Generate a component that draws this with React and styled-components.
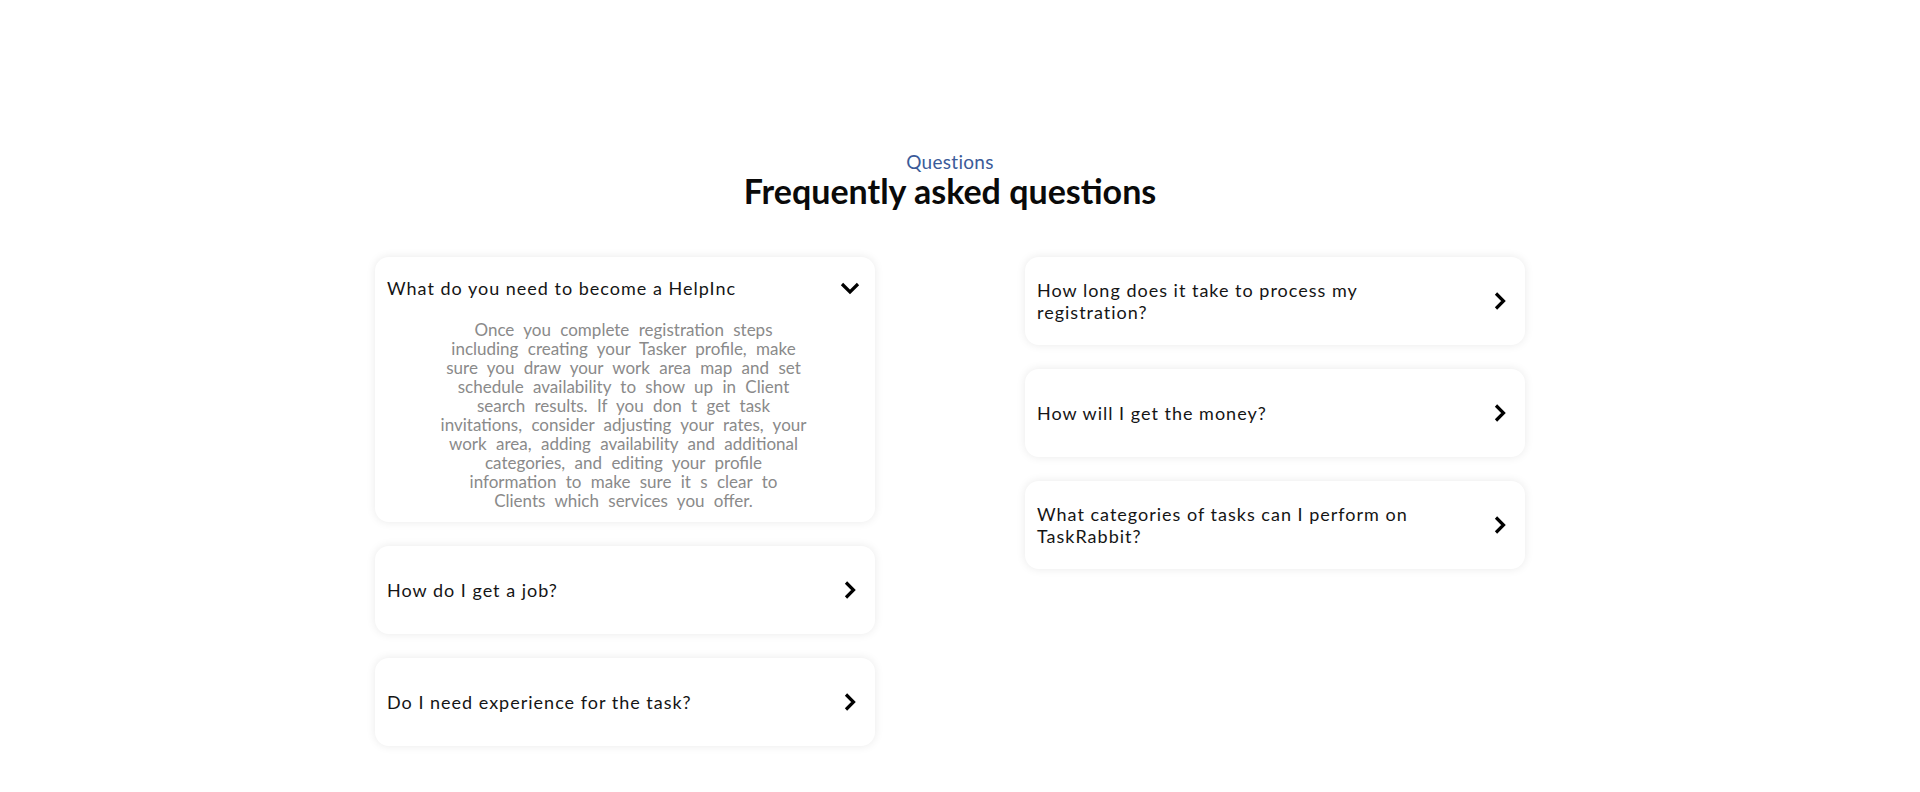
import React from 'react';
import styled, { createGlobalStyle } from 'styled-components';

const GlobalStyle = createGlobalStyle`
  body {
    margin: 0;
    padding-right: 20px;
    background: #ffffff;
    font-family: 'Lato', 'Open Sans', sans-serif;
  }
`;

const Section = styled.section`
  padding: 152px 0 40px;
  text-align: center;
`;

const Eyebrow = styled.p`
  margin: 0;
  font-size: 19px;
  line-height: 20px;
  color: #3b5b99;
  letter-spacing: 0.3px;
`;

const Heading = styled.h2`
  margin: 0;
  font-size: 34px;
  line-height: 38px;
  font-weight: 700;
  color: #0a0a0a;
`;

const Columns = styled.div`
  margin-top: 47px;
  display: flex;
  justify-content: center;
  align-items: flex-start;
  gap: 150px;
  text-align: left;
`;

const Column = styled.div`
  width: 500px;
  display: flex;
  flex-direction: column;
  gap: 24px;
`;

const Card = styled.div`
  background: #fff;
  border-radius: 14px;
  box-shadow: 0 0 10px rgba(0, 0, 0, 0.09);
  padding: ${(p) => (p.$open ? '12px 15px 12px 12px' : '0 15px 0 12px')};
`;

const Header = styled.div`
  display: flex;
  align-items: center;
  justify-content: space-between;
  min-height: ${(p) => (p.$open ? '38px' : '88px')};
`;

const Question = styled.span`
  max-width: 395px;
  font-size: 18px;
  line-height: 22px;
  letter-spacing: 1px;
  color: #151515;
`;

const Answer = styled.p`
  margin: 13px auto 0;
  width: 420px;
  font-size: 17px;
  line-height: 19px;
  color: #8a8a8a;
  text-align: center;
  word-spacing: 5px;
  white-space: nowrap;
`;

const Chevron = ({ open }) => (
  <svg width="20" height="20" viewBox="0 0 20 20" fill="none">
    <polyline
      points={open ? '2,6 10,14 18,6' : '6,2.5 13.5,10 6,17.5'}
      stroke="#000"
      strokeWidth="3.2"
      strokeLinejoin="miter"
    />
  </svg>
);

const answerLines = [
  'Once you complete registration steps',
  'including creating your Tasker profile, make',
  'sure you draw your work area map and set',
  'schedule availability to show up in Client',
  'search results. If you don t get task',
  'invitations, consider adjusting your rates, your',
  'work area, adding availability and additional',
  'categories, and editing your profile',
  'information to make sure it s clear to',
  'Clients which services you offer.',
];

const left = [
  { q: 'What do you need to become a HelpInc', open: true },
  { q: 'How do I get a job?' },
  { q: 'Do I need experience for the task?' },
];

const right = [
  { q: 'How long does it take to process my registration?' },
  { q: 'How will I get the money?' },
  { q: 'What categories of tasks can I perform on TaskRabbit?' },
];

const FaqItem = ({ q, open }) => (
  <Card $open={open}>
    <Header $open={open}>
      <Question>{q}</Question>
      <Chevron open={open} />
    </Header>
    {open && (
      <Answer>
        {answerLines.map((line, i) => (
          <React.Fragment key={i}>
            {line}
            {i < answerLines.length - 1 && <br />}
          </React.Fragment>
        ))}
      </Answer>
    )}
  </Card>
);

export default function App() {
  return (
    <>
      <GlobalStyle />
      <Section>
        <Eyebrow>Questions</Eyebrow>
        <Heading>Frequently asked questions</Heading>
        <Columns>
          <Column>
            {left.map((item) => (
              <FaqItem key={item.q} {...item} />
            ))}
          </Column>
          <Column>
            {right.map((item) => (
              <FaqItem key={item.q} {...item} />
            ))}
          </Column>
        </Columns>
      </Section>
    </>
  );
}
